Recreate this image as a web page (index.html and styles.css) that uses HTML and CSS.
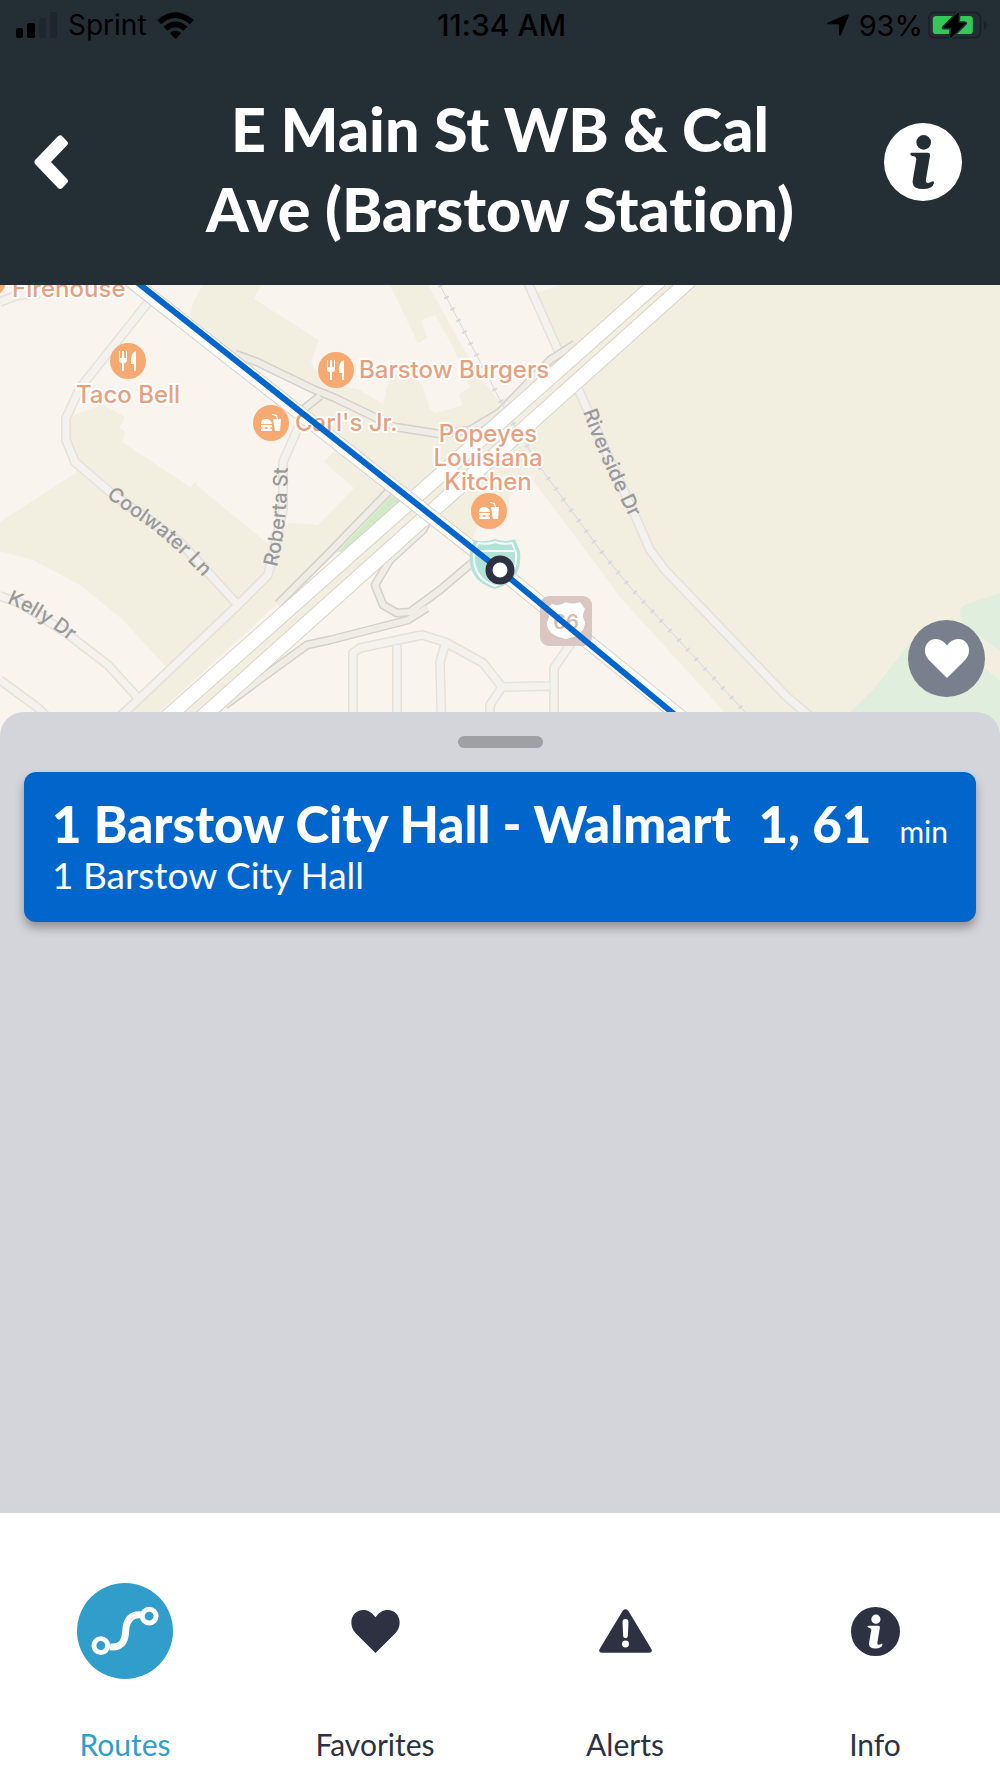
FILE: index.html
```html
<!DOCTYPE html>
<html lang="en">
<head>
<meta charset="utf-8">
<meta name="viewport" content="width=device-width, initial-scale=1">
<title>E Main St WB &amp; Cal Ave (Barstow Station)</title>
<link rel="stylesheet" href="styles.css">
</head>
<body>
<svg class="defs" aria-hidden="true">
  <defs>
    <symbol id="heart" viewBox="0 0 146 130">
      <path d="M73 130 13 70C4 60 0 51 0 37 0 16 16 0 36 0c15 0 27 8 37 22C83 8 95 0 110 0c20 0 36 16 36 37 0 14-4 23-13 33Z"/>
    </symbol>
    <symbol id="info" viewBox="-117 -117 234 234">
      <path fill-rule="evenodd" d="M0-117A117 117 0 1 1 0 117 117 117 0 1 1 0-117ZM2-81a22 22 0 1 0 0 44 22 22 0 1 0 0-44ZM-34-28Q-38-28-38-24-38-19-32-18-20-17-20-8L-30 50Q-31 56-31 62-29 81 0 81 29 81 33 63 34 57 28 58 21 63 15 63 7 63 9 52L21-19Q22-28 14-28Z"/>
    </symbol>
    <symbol id="dining" viewBox="-18 -18 36 36">
      <circle r="18" fill="#f6aa72"/>
      <path fill="#fff" d="M-9-10h1v7h2v-7h2v7h2v-7h1v9q0 3-3 3v8h-2V2q-3 0-3-3ZM8-10V10H6V3H3Q2-8 8-10Z"/>
    </symbol>
    <symbol id="fastfood" viewBox="-18 -18 36 36">
      <circle r="18" fill="#f6aa72"/>
      <path fill="#fff" d="M-10 1q0-5 5-5t6 5ZM-10 2H1v2l-3 1-3-1-3 1-2-1ZM-10 6l3-1 2 1 3-1 3 1v2H-10ZM2-4h4l-1-3-4-1v-1l5 1 1 4h3L9 8H4Z"/>
    </symbol>
  </defs>
</svg>

<div class="app">
  <header class="header">
    <div class="status">
      <div class="status-left">
        <svg class="signal" viewBox="0 0 42 26" aria-label="Signal strength">
          <rect x="0" y="16" width="7" height="10" rx="2"/>
          <rect x="11" y="11" width="8" height="15" rx="2"/>
          <rect class="faint" x="23" y="6" width="7" height="20" rx="2"/>
          <rect class="faint" x="34" y="0" width="7" height="26" rx="2"/>
        </svg>
        <span>Sprint</span>
        <svg class="wifi" viewBox="0 0 110 81" aria-label="Wi-Fi">
          <path d="M0 24Q55-23 110 24L98 37Q55-1 12 37ZM19 44Q55 13 91 44L79 56Q55 36 31 56ZM38 63Q55 50 72 63L59 78Q55 82 51 78Z"/>
        </svg>
      </div>
      <time class="clock">11:34 AM</time>
      <div class="status-right">
        <svg class="location" viewBox="0 0 66 66" aria-label="Location in use">
          <path d="M60 1Q67-1 65 6L42 63Q38 68 36 61V35Q36 31 31 31H4Q-3 30 4 25Z"/>
        </svg>
        <span class="charge">93%</span>
        <svg class="battery" viewBox="0 0 176 84" aria-label="Charging">
          <rect x="2" y="4" width="155" height="76" rx="18" fill="none" stroke="#1b2129" stroke-width="5"/>
          <path d="M167 30Q176 33 176 42T167 57Z" fill="#1b2129"/>
          <rect x="14" y="15" width="120" height="54" rx="10" fill="#34c85a"/>
          <path d="M89 2 44 48q-3 5 3 5h20l-4 30 8-2 42-41q4-6-4-7H93L95 4Z" fill="#000" stroke="#242e35" stroke-width="5"/>
        </svg>
      </div>
    </div>
    <div class="title-row">
      <button class="icon-button back" aria-label="Back">
        <svg viewBox="0 0 102 162"><path d="M72 4q7-7 13 0l14 15q6 6 0 12L51 81l48 51q6 6 0 12l-14 15q-7 6-13 0L4 88q-6-7 0-14Z"/></svg>
      </button>
      <h1>E Main St WB &amp; Cal Ave (Barstow Station)</h1>
      <button class="icon-button about" aria-label="Stop information"><svg><use href="#info"/></svg></button>
    </div>
  </header>

  <main class="main">
    <section class="map" aria-label="Map">
      <svg class="map-canvas" viewBox="0 285 1000 455" preserveAspectRatio="xMidYMin slice">
        <g class="land">
          <path d="M190 316 193 303 203 285H1000V740H745L720 707 620 597 583 547 540 490 530 475 510 492 508 510 478 526 465 555 400 490Z"/>
          <path d="M0 522 77 472 65 440 68 417 103 405 125 417 120 427 125 432 122 442 190 487 195 482 200 488 267 543 272 530 290 523 318 525 354 488 324 462 345 440 400 490 160 712 130 740H100L167 668 123 620 80 585 33 560 0 551Z"/>
        </g>
        <g class="lots">
          <path d="M261 285 254 299 290 322 319 340 311 362 325 385 358 389 383 404 388 383 405 363 423 387 430 410 436 413 463 405 459 395 470 387 452 345 435 315 421 320 427 338 418 343 390 285Z"/>
          <path d="M428 285H560L537 293 530 300 560 357 500 402 480 378Z"/>
          <path d="M245 362 315 395 302 408Z"/>
        </g>
        <g class="park">
          <path d="M1000 593 967 604Q960 606 960 612L962 622 985 640 1000 651Z"/>
          <path d="M920 635 907 647 873 690 850 712 815 740H1000V681L987 670 950 640Z"/>
          <path class="verge" d="M393 494 404 502 346 552 337 552Z"/>
        </g>
        <path class="street-case" d="M150 300 80 388 66 418V440L75 462 110 492 180 542 238 605M305 412 283 462V510L268 575 238 605 140 698 95 740M0 596 20 603 65 632 108 665 138 698M0 680 38 708 60 730M0 302 15 296 40 293M353 740V653L360 648 422 635 445 642 483 663 502 687 550 686M397 740V645M442 740 440 662 445 645M502 687 490 705V740M554 740V668L572 642M528 283 558 350 580 393 637 520 650 550 665 570 787 697 806 713 830 735"/>
        <path class="street" d="M150 300 80 388 66 418V440L75 462 110 492 180 542 238 605M305 412 283 462V510L268 575 238 605 140 698 95 740M0 596 20 603 65 632 108 665 138 698M0 680 38 708 60 730M0 302 15 296 40 293M353 740V653L360 648 422 635 445 642 483 663 502 687 550 686M397 740V645M442 740 440 662 445 645M502 687 490 705V740M554 740V668L572 642M528 283 558 350 580 393 637 520 650 550 665 570 787 697 806 713 830 735"/>
        <path class="ramp-case" d="M235 354 257 362 315 390 335 398 395 427 440 434 470 430 500 412 550 360 575 344M300 412 320 396M390 490 330 552 278 604M428 520 423 530 390 560 375 585 383 605 397 613 410 612 440 590 473 562M427 608 408 620 330 640 307 645 225 705"/>
        <path class="ramp" d="M235 354 257 362 315 390 335 398 395 427 440 434 470 430 500 412 550 360 575 344M300 412 320 396M390 490 330 552 278 604M428 520 423 530 390 560 375 585 383 605 397 613 410 612 440 590 473 562M427 608 408 620 330 640 307 645 225 705"/>
        <path class="median" d="M669 285 190 712 150 748"/>
        <path class="rail" d="M440 285 500 400 513 423 540 467 600 550 630 587 743 710 765 735"/>
        <path class="rail-ties" d="M440 285 500 400 513 423 540 467 600 550 630 587 743 710 765 735"/>
        <path class="highway-case" d="M660 280 173 712 143 739M690 280 208 712 178 739"/>
        <path class="highway" d="M660 280 173 712 143 739M690 280 208 712 178 739"/>
        <path class="main-case" d="M130 280 502 572 703 735"/>
        <path class="main-road" d="M130 280 502 572 703 735"/>

        <g class="shields">
          <path d="M474 540Q484 543 495 539 506 543 515 539L520 552Q523 581 495 589 467 581 470 552Z" fill="#b3e2d7"/>
          <path d="M475 551H514M478 543Q486 545 495 542 504 545 512 543L516 553Q518 578 495 586 472 578 474 553Z" fill="none" stroke="#f5fbf8" stroke-width="2"/>
          <rect x="540" y="596" width="52" height="50" rx="9" fill="#dac7c1"/>
          <path d="M552 604q7 3 14-2 6 3 14 0l5 7q-4 7 0 13 0 13-19 17-20-4-19-17 4-6 0-13Z" fill="#fff"/>
          <text x="566" y="629" text-anchor="middle">66</text>
        </g>

        <g class="poi">
          <circle cx="-12" cy="280" r="18" fill="#f6aa72"/>
          <use href="#dining" x="110" y="343" width="36" height="36"/>
          <use href="#dining" x="318" y="352" width="36" height="36"/>
          <use href="#fastfood" x="253" y="405" width="36" height="36"/>
          <use href="#fastfood" x="471" y="493" width="36" height="36"/>
          <text x="12" y="297">Firehouse</text>
          <text x="128" y="403" text-anchor="middle">Taco Bell</text>
          <text x="359" y="378">Barstow Burgers</text>
          <text x="295" y="431">Carl's Jr.</text>
          <text text-anchor="middle"><tspan x="488" y="442">Popeyes</tspan><tspan x="488" y="466">Louisiana</tspan><tspan x="488" y="490">Kitchen</tspan></text>
        </g>
        <g class="street-names">
          <path id="coolwater" d="M106 497 150 528Q180 550 222 598"/>
          <path id="roberta" d="M277 567Q288 525 288 445"/>
          <path id="kelly" d="M7 603Q40 616 84 652"/>
          <path id="riverside" d="M583 412Q600 462 644 546"/>
          <text><textPath href="#coolwater">Coolwater Ln</textPath></text>
          <text><textPath href="#roberta">Roberta St</textPath></text>
          <text><textPath href="#kelly">Kelly Dr</textPath></text>
          <text><textPath href="#riverside">Riverside Dr</textPath></text>
        </g>

        <path class="route" d="M133 279 500 570 692 729"/>
        <circle class="stop" cx="500" cy="570" r="11"/>
      </svg>
      <button class="favorite" aria-label="Add to favorites"><svg><use href="#heart"/></svg></button>
    </section>

    <section class="sheet" aria-label="Departures">
      <div class="handle"></div>
      <a class="card" href="#route-1">
        <span class="route-info">
          <strong>1 Barstow City Hall - Walmart</strong>
          <span class="direction">1 Barstow City Hall</span>
        </span>
        <span class="eta"><strong>1, 61</strong><span class="unit">min</span></span>
      </a>
    </section>
  </main>

  <nav class="tabs" aria-label="Main">
    <a class="tab active" href="#routes">
      <span class="tab-icon"><svg viewBox="0 0 290 290"><path d="M100 193Q145 199 147 145 150 94 192 96" fill="none" stroke="#fff" stroke-width="21"/><circle cx="72" cy="189" r="21"/><circle cx="218" cy="100" r="21"/></svg></span>
      <span>Routes</span>
    </a>
    <a class="tab" href="#favorites">
      <span class="tab-icon"><svg class="i-heart"><use href="#heart"/></svg></span>
      <span>Favorites</span>
    </a>
    <a class="tab" href="#alerts">
      <span class="tab-icon"><svg class="i-alert" viewBox="0 0 160 132"><path fill-rule="evenodd" d="M72 4q8-8 16 0l70 116q5 10-6 12H8q-11-2-6-12ZM80 30q-9 0-9 9l2 43q1 6 7 6t7-6l2-43q0-9-9-9ZM80 95a10 10 0 1 0 0 21 10 10 0 1 0 0-21Z"/></svg></span>
      <span>Alerts</span>
    </a>
    <a class="tab" href="#info-page">
      <span class="tab-icon"><svg class="i-info"><use href="#info"/></svg></span>
      <span>Info</span>
    </a>
  </nav>
</div>
</body>
</html>
```
FILE: styles.css
```css
* {
  box-sizing: border-box;
}

body {
  margin: 0;
  font-family: Lato, "Liberation Sans", sans-serif;
  font-variant-ligatures: none;
  color: #2d3142;
}

svg {
  display: block;
}

button {
  padding: 0;
  border: 0;
  background: none;
  color: inherit;
  cursor: pointer;
}

a {
  color: inherit;
  text-decoration: none;
}

.defs {
  position: absolute;
  width: 0;
  height: 0;
}

.app {
  display: flex;
  flex-direction: column;
  min-height: 100vh;
}

/* Header */

.header {
  background: #242e35;
  color: #fff;
  padding-bottom: 36px;
}

.status {
  display: grid;
  grid-template-columns: 1fr auto 1fr;
  align-items: center;
  height: 50px;
  padding: 0 13px 0 16px;
  font-family: Inter, "Liberation Sans", sans-serif;
  font-size: 28px;
  color: #000;
}

.status-left,
.status-right {
  display: flex;
  align-items: center;
}

.status-left {
  gap: 10px;
}

.status-right {
  justify-content: flex-end;
  gap: 10px;
}

.clock {
  font-size: 30px;
  font-weight: 500;
}

.charge {
  font-size: 29px;
  margin-right: -5px;
}

.signal {
  width: 42px;
  height: 26px;
}

.faint {
  fill: #1d252d;
}

.wifi {
  width: 37px;
  height: 27px;
}

.location {
  width: 22px;
  height: 22px;
}

.battery {
  width: 59px;
  height: 28px;
}

.title-row {
  display: grid;
  grid-template-columns: 180px 1fr 180px;
  align-items: center;
  padding-top: 25px;
}

.title-row h1 {
  margin: 0;
  padding-top: 14px;
  font-size: 61px;
  line-height: 80px;
  font-weight: 900;
  text-align: center;
}

.back {
  justify-self: start;
  margin-left: 34px;
}

.back svg {
  width: 34px;
  height: 54px;
  fill: #fff;
}

.about {
  justify-self: end;
  margin-right: 38px;
}

.about svg {
  width: 78px;
  height: 78px;
  fill: #fff;
}

/* Map */

.main {
  display: flex;
  flex-direction: column;
  flex: 1;
}

.map {
  position: relative;
  height: 455px;
  background: #f9f4ed;
}

.map-canvas {
  width: 100%;
  height: 100%;
}

.map-canvas path {
  stroke-linejoin: round;
}

.land {
  fill: #f2eee0;
}

.lots {
  fill: #f9f4ed;
}

.park {
  fill: #e0eedd;
}

.verge {
  fill: #d1eac8;
}

.street,
.street-case,
.ramp,
.ramp-case,
.median,
.rail,
.rail-ties,
.highway,
.highway-case,
.main-road,
.main-case,
.route {
  fill: none;
}

.street-case {
  stroke: #e5e1d8;
  stroke-width: 10;
}

.street {
  stroke: #f3f2ee;
  stroke-width: 7;
}

.ramp-case {
  stroke: #d6d1c8;
  stroke-width: 9;
}

.ramp {
  stroke: #f0ede6;
  stroke-width: 6;
}

.median {
  stroke: #f2efe0;
  stroke-width: 12;
}

.rail,
.rail-ties {
  stroke: #d5d9de;
  stroke-width: 1;
}

.rail-ties {
  stroke-width: 5;
  stroke-dasharray: 2 11;
}

.highway-case {
  stroke: #d8d3ca;
  stroke-width: 16;
}

.highway {
  stroke: #fff;
  stroke-width: 14;
}

.main-case {
  stroke: #d8d3ca;
  stroke-width: 15;
}

.main-road {
  stroke: #fff;
  stroke-width: 13;
}

.route {
  stroke: #0166cc;
  stroke-width: 6;
}

.stop {
  fill: #fff;
  stroke: #2d3142;
  stroke-width: 7;
}

.poi text,
.street-names text,
.shields text {
  font-family: Inter, "Liberation Sans", sans-serif;
}

.poi text {
  font-size: 24px;
  font-weight: 500;
  fill: #e5a17f;
  stroke: #fff;
  stroke-width: 4px;
  stroke-linejoin: round;
  paint-order: stroke;
}

.street-names path {
  fill: none;
}

.street-names text {
  font-size: 20px;
  font-weight: 500;
  fill: #999;
}

.shields text {
  font-size: 20px;
  font-weight: 600;
  fill: #d5bdb0;
}

.favorite {
  position: absolute;
  right: 15px;
  bottom: 43px;
  display: grid;
  place-items: center;
  width: 77px;
  height: 77px;
  border-radius: 50%;
  background: #787f8d;
}

.favorite svg {
  width: 44px;
  height: 41px;
  fill: #fff;
}

/* Departures sheet */

.sheet {
  position: relative;
  flex: 1;
  margin-top: -28px;
  padding: 24px;
  border-radius: 24px 24px 0 0;
  background: #d4d5da;
}

.handle {
  width: 85px;
  height: 12px;
  margin: 0 auto 24px;
  border-radius: 6px;
  background: #9fa0a4;
}

.card {
  display: flex;
  justify-content: space-between;
  padding: 24px 28px;
  border-radius: 12px;
  background: #0166cc;
  box-shadow: 0 6px 10px rgba(45, 49, 66, 0.4);
  color: #fff;
}

.card strong {
  font-size: 51px;
  line-height: 56px;
  font-weight: 900;
}

.route-info {
  display: flex;
  flex-direction: column;
}

.direction {
  font-size: 37px;
  line-height: 46px;
}

.eta {
  display: flex;
  align-items: baseline;
  align-self: flex-start;
  gap: 28px;
}

.unit {
  font-size: 30px;
}

/* Tab bar */

.tabs {
  display: grid;
  grid-template-columns: repeat(4, 1fr);
  padding: 70px 0 16px;
  background: #fff;
}

.tab {
  display: flex;
  flex-direction: column;
  align-items: center;
  gap: 47px;
  font-size: 30px;
  line-height: 36px;
}

.tab.active {
  color: #309dcb;
}

.tab-icon {
  display: grid;
  place-items: center;
  width: 96px;
  height: 96px;
  border-radius: 50%;
  fill: #2d3142;
}

.active .tab-icon {
  background: #309dcb;
}

.active svg {
  width: 96px;
  height: 96px;
}

.active circle {
  fill: #309dcb;
  stroke: #fff;
  stroke-width: 15;
}

.i-heart {
  width: 49px;
  height: 43px;
}

.i-alert {
  width: 53px;
  height: 44px;
}

.i-info {
  width: 49px;
  height: 49px;
}
```
